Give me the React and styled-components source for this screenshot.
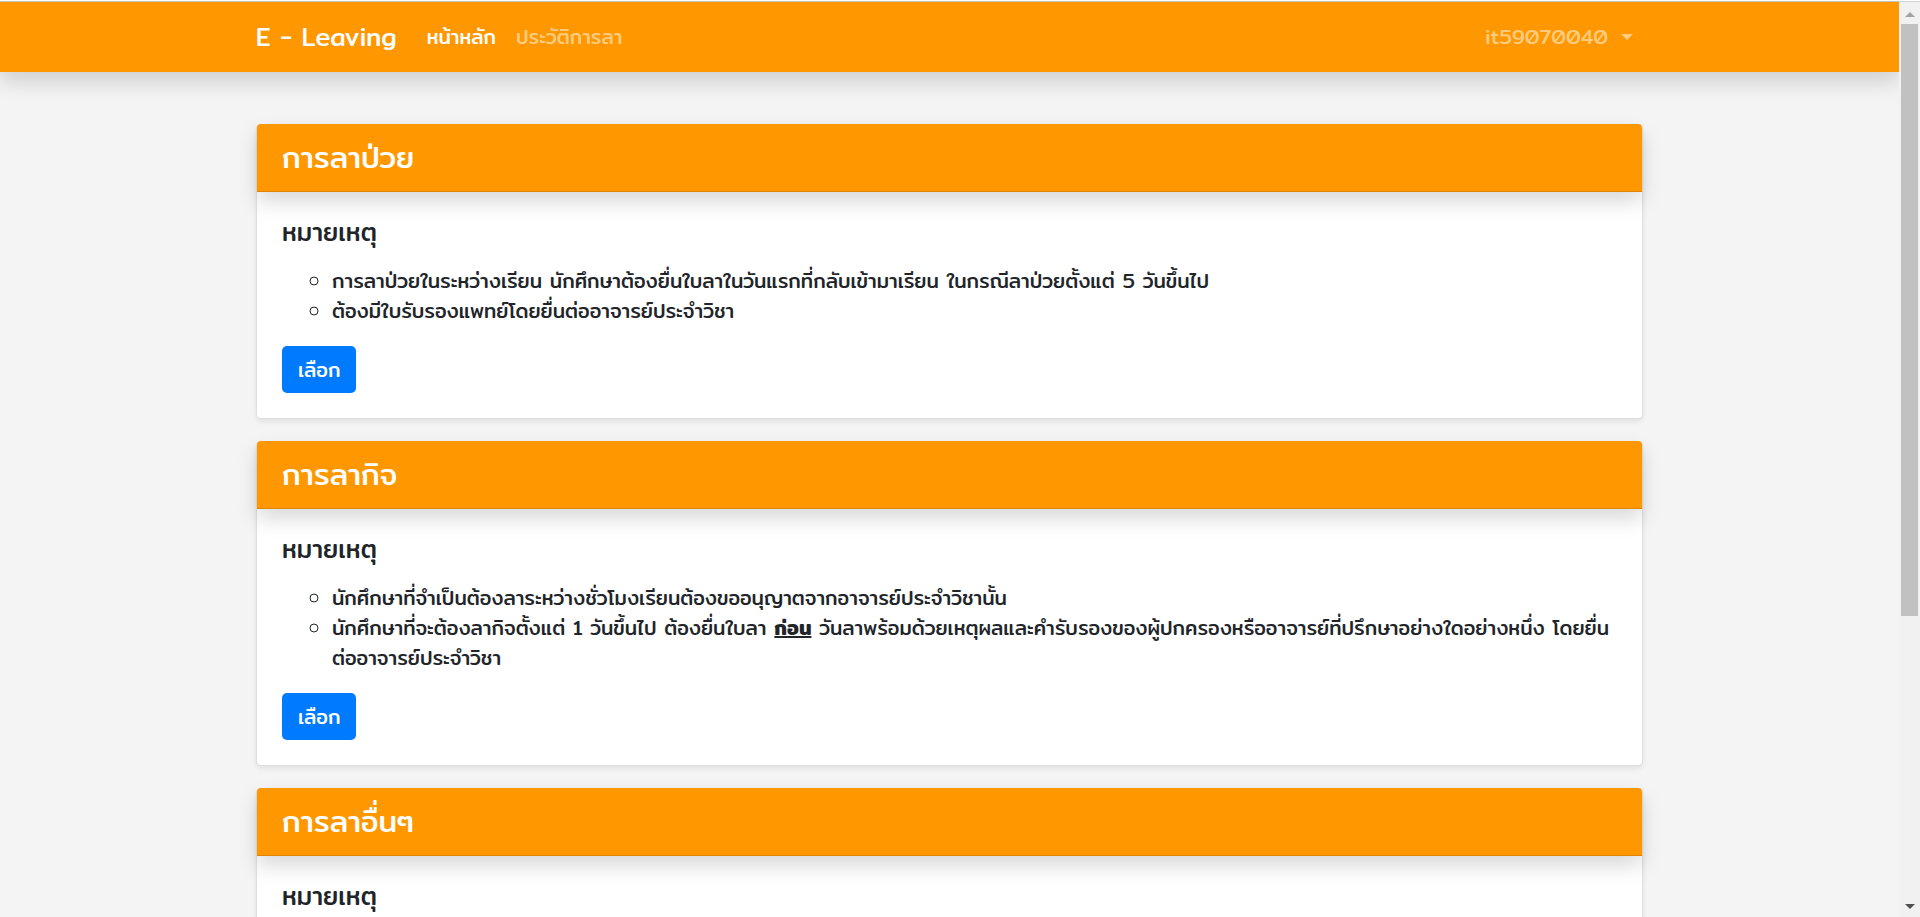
import React from "react";
import styled, { createGlobalStyle } from "styled-components";

const GlobalStyle = createGlobalStyle`
  *, *::before, *::after { box-sizing: border-box; }
  body {
    margin: 0;
    background: #f4f4f4;
    color: #212529;
    font-family: Mitr, Prompt, Kanit, "Noto Sans", sans-serif;
    font-size: 20px;
    font-weight: 400;
    line-height: 30px;
  }
`;

const Window = styled.div`
  display: flex;
  height: 100vh;
  overflow: hidden;
  border-top: 1px solid #fff;
`;

const Page = styled.div`
  flex: 1;
  min-width: 0;
  overflow: hidden;
  border-top: 1px solid #c8c2b8;
`;

const Container = styled.div`
  width: 100%;
  max-width: 1427px;
  margin: 0 auto;
  padding: 0 20px;
`;

const Navbar = styled.nav`
  background: #ff9800;
  box-shadow: 0 10px 20px rgba(0, 0, 0, 0.15);
`;

const NavInner = styled(Container)`
  display: flex;
  align-items: center;
  height: 70px;
`;

const Brand = styled.a`
  margin-right: 20px;
  color: #fff;
  font-size: 25px;
  text-decoration: none;
`;

const NavLink = styled.a`
  padding: 0 10px;
  color: ${(p) => (p.$active ? "#fff" : "rgba(255, 255, 255, 0.5)")};
  text-decoration: none;
`;

const UserMenu = styled.button`
  display: flex;
  align-items: center;
  gap: 13px;
  margin-left: auto;
  padding: 0 10px;
  border: 0;
  background: none;
  color: rgba(255, 255, 255, 0.5);
  font: inherit;
`;

const Caret = styled.span`
  border: 6px solid transparent;
  border-top-color: currentColor;
  border-bottom: 0;
`;

const Cards = styled(Container)`
  display: flex;
  flex-direction: column;
  gap: 22px;
  padding-top: 52px;
`;

const Card = styled.section`
  border: 1px solid rgba(0, 0, 0, 0.125);
  border-top: 0;
  border-radius: 5px;
  background: #fff;
  box-shadow: 0 3px 5px rgba(0, 0, 0, 0.075);
`;

const CardHeader = styled.header`
  padding: 15px 25px;
  border-bottom: 1px solid rgba(0, 0, 0, 0.125);
  border-radius: 4px 4px 0 0;
  background: #ff9800;
  box-shadow: 0 10px 20px rgba(0, 0, 0, 0.15);
`;

const CardTitle = styled.h4`
  margin: 0;
  color: #fff;
  font-size: 30px;
  font-weight: 400;
  line-height: 37px;
`;

const CardBody = styled.div`
  padding: 25px;
`;

const NoteTitle = styled.h5`
  margin: 0 0 18px;
  font-size: 25px;
  font-weight: 400;
  line-height: 31px;
`;

const Notes = styled.ul`
  margin: 0 0 20px;
  padding-left: 50px;
  list-style: circle;
`;

const Emphasis = styled.strong`
  font-weight: 600;
  text-decoration: underline;
`;

const SelectButton = styled.button`
  display: block;
  height: 47px;
  padding: 0 16px;
  border: 0;
  border-radius: 5px;
  background: #007bff;
  color: #fff;
  font: inherit;
`;

const Scrollbar = styled.div`
  display: flex;
  flex-direction: column;
  align-items: center;
  width: 21px;
  padding: 10px 0 8px;
  border-top: 1px solid #d4d4d4;
  background: #f1f1f1;
`;

const Thumb = styled.div`
  flex: 0 0 66%;
  width: 17px;
  margin: 7px 0 auto;
  background: #c1c1c1;
`;

const Arrow = styled.span`
  border: 5px solid transparent;
  border-${(p) => (p.$up ? "bottom" : "top")}-color: ${(p) => (p.$up ? "#a3a3a3" : "#505050")};
  border-${(p) => (p.$up ? "top" : "bottom")}: 0;
`;

const leaveTypes = [
  {
    title: "การลาป่วย",
    notes: [
      "การลาป่วยในระหว่างเรียน นักศึกษาต้องยื่นใบลาในวันแรกที่กลับเข้ามาเรียน ในกรณีลาป่วยตั้งแต่ 5 วันขึ้นไป",
      "ต้องมีใบรับรองแพทย์โดยยื่นต่ออาจารย์ประจำวิชา",
    ],
  },
  {
    title: "การลากิจ",
    notes: [
      "นักศึกษาที่จำเป็นต้องลาระหว่างชั่วโมงเรียนต้องขออนุญาตจากอาจารย์ประจำวิชานั้น",
      <>
        นักศึกษาที่จะต้องลากิจตั้งแต่ 1 วันขึ้นไป ต้องยื่นใบลา{" "}
        <Emphasis>ก่อน</Emphasis>{" "}
        วันลาพร้อมด้วยเหตุผลและคำรับรองของผู้ปกครองหรืออาจารย์ที่ปรึกษาอย่างใดอย่างหนึ่ง โดยยื่นต่ออาจารย์ประจำวิชา
      </>,
    ],
  },
  { title: "การลาอื่นๆ", notes: [] },
];

export default function App() {
  return (
    <>
      <GlobalStyle />
      <Window>
        <Page>
          <Navbar>
            <NavInner>
              <Brand href="#">E - Leaving</Brand>
              <NavLink href="#" $active>หน้าหลัก</NavLink>
              <NavLink href="#">ประวัติการลา</NavLink>
              <UserMenu type="button">
                it59070040
                <Caret />
              </UserMenu>
            </NavInner>
          </Navbar>
          <Cards as="main">
            {leaveTypes.map((type) => (
              <Card key={type.title}>
                <CardHeader>
                  <CardTitle>{type.title}</CardTitle>
                </CardHeader>
                <CardBody>
                  <NoteTitle>หมายเหตุ</NoteTitle>
                  <Notes>
                    {type.notes.map((note, i) => (
                      <li key={i}>{note}</li>
                    ))}
                  </Notes>
                  <SelectButton type="button">เลือก</SelectButton>
                </CardBody>
              </Card>
            ))}
          </Cards>
        </Page>
        <Scrollbar aria-hidden="true">
          <Arrow $up />
          <Thumb />
          <Arrow />
        </Scrollbar>
      </Window>
    </>
  );
}
